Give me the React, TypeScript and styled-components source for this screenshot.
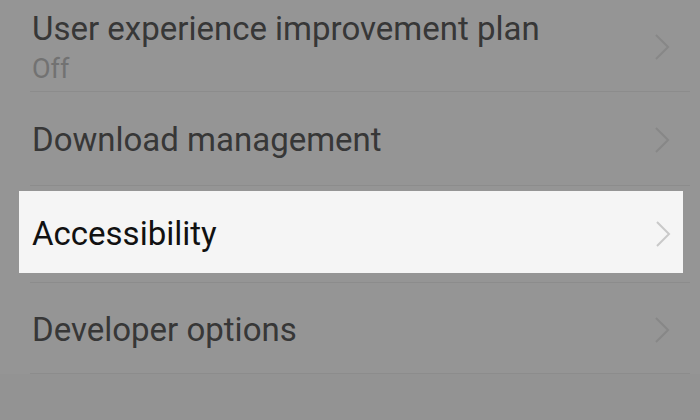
import React from "react";
import styled, { createGlobalStyle } from "styled-components";

const GlobalStyle = createGlobalStyle`
  html, body {
    margin: 0;
    padding: 0;
    background: #959595;
    font-family: Roboto, "Noto Sans", "Liberation Sans", sans-serif;
  }
`;

const Screen = styled.div`
  width: 700px;
  height: 420px;
  overflow: hidden;
  background: #959595;
  display: flex;
  flex-direction: column;
`;

const Row = styled.div<{ $height: number }>`
  height: ${(p) => p.$height}px;
  flex-shrink: 0;
  box-sizing: border-box;
  display: flex;
  flex-direction: column;
  border-bottom: 1px solid #8c8c8c;
  margin: 0 10px 0 30px;
`;

const Spot = styled.div<{ $highlight?: boolean }>`
  flex: 1;
  display: flex;
  align-items: center;
  justify-content: space-between;
  background: ${(p) => (p.$highlight ? "#f5f5f5" : "transparent")};
  margin: ${(p) => (p.$highlight ? "5px 7px 9px -11px" : "0")};
  padding: ${(p) => (p.$highlight ? "4px 12px 0 13px" : "3px 20px 0 2px")};
`;

const Texts = styled.div`
  display: flex;
  flex-direction: column;
  gap: 4px;
`;

const Title = styled.div<{ $highlight?: boolean }>`
  font-size: 33px;
  line-height: 40px;
  color: ${(p) => (p.$highlight ? "#111111" : "#373737")};
`;

const Sub = styled.div`
  font-size: 27px;
  line-height: 32px;
  color: #727272;
`;

const Chevron = ({ color }: { color: string }) => (
  <svg width="16" height="28" viewBox="0 0 16 28">
    <path d="M2 2 L14 14 L2 26" fill="none" stroke={color} strokeWidth="2" />
  </svg>
);

const Bottom = styled.div`
  flex: 1;
  background: #939393;
`;

const items = [
  { title: "User experience improvement plan", sub: "Off", height: 92 },
  { title: "Download management", height: 94 },
  { title: "Accessibility", height: 97, highlight: true },
  { title: "Developer options", height: 91 },
];

export default function App() {
  return (
    <Screen>
      <GlobalStyle />
      {items.map((it) => (
        <Row key={it.title} $height={it.height}>
          <Spot $highlight={it.highlight}>
            <Texts>
              <Title $highlight={it.highlight}>{it.title}</Title>
              {it.sub && <Sub>{it.sub}</Sub>}
            </Texts>
            <Chevron color={it.highlight ? "#c9c9c9" : "#878787"} />
          </Spot>
        </Row>
      ))}
      <Bottom />
    </Screen>
  );
}
